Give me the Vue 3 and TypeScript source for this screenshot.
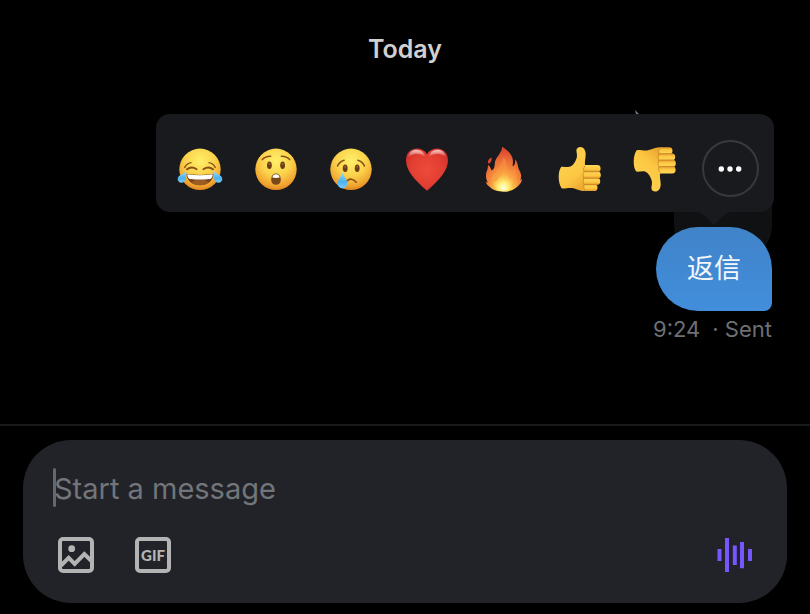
<script setup lang="ts">
import { ref } from 'vue'

interface Reaction {
  id: string
  label: string
}

const reactions: Reaction[] = [
  { id: 'joy', label: 'Laugh' },
  { id: 'astonished', label: 'Surprised' },
  { id: 'cry', label: 'Sad' },
  { id: 'heart', label: 'Love' },
  { id: 'fire', label: 'Fire' },
  { id: 'up', label: 'Thumbs up' },
  { id: 'down', label: 'Thumbs down' },
]

const draft = ref('')
</script>

<template>
  <div class="page">
    <svg class="defs" width="0" height="0" aria-hidden="true">
      <defs>
        <radialGradient id="face" cx=".5" cy=".3" r=".72">
          <stop offset="0" stop-color="#fff06a" />
          <stop offset=".5" stop-color="#fbd24b" />
          <stop offset=".85" stop-color="#efa12e" />
          <stop offset="1" stop-color="#dc7f1e" />
        </radialGradient>
        <linearGradient id="tear" x1="0" y1="0" x2="0" y2="1">
          <stop offset="0" stop-color="#9bdcf8" />
          <stop offset=".6" stop-color="#4eb2ee" />
          <stop offset="1" stop-color="#76cdf8" />
        </linearGradient>
        <radialGradient id="heartFill" cx=".5" cy=".5" r=".6">
          <stop offset="0" stop-color="#ee4b3b" />
          <stop offset=".7" stop-color="#e03c31" />
          <stop offset="1" stop-color="#c92f2b" />
        </radialGradient>
        <linearGradient id="gloss" x1="0" y1="0" x2="0" y2="1">
          <stop offset="0" stop-color="#fff" stop-opacity=".75" />
          <stop offset="1" stop-color="#fff" stop-opacity="0" />
        </linearGradient>
        <radialGradient id="flame" cx=".5" cy=".9" r=".85">
          <stop offset="0" stop-color="#fff6a0" />
          <stop offset=".22" stop-color="#fdd84f" />
          <stop offset=".5" stop-color="#f58a3c" />
          <stop offset="1" stop-color="#dc4530" />
        </radialGradient>
        <radialGradient id="core" cx=".5" cy=".85" r=".7">
          <stop offset="0" stop-color="#fffde0" />
          <stop offset=".35" stop-color="#fff07a" />
          <stop offset="1" stop-color="#fbb43c" stop-opacity=".1" />
        </radialGradient>
        <linearGradient id="hand" x1="0" y1="0" x2=".6" y2="1">
          <stop offset="0" stop-color="#ffd452" />
          <stop offset=".7" stop-color="#fcc844" />
          <stop offset="1" stop-color="#eda831" />
        </linearGradient>
        <linearGradient id="finger" x1="0" y1="0" x2="0" y2="1">
          <stop offset="0" stop-color="#ffd756" />
          <stop offset=".6" stop-color="#fcc742" />
          <stop offset="1" stop-color="#dd952a" />
        </linearGradient>
      </defs>
    </svg>

    <main class="thread">
      <h1 class="day">Today</h1>

      <div class="picker" role="toolbar" aria-label="Reactions">
        <svg class="pointer" viewBox="0 0 4 5" aria-hidden="true"><path d="M0 0l4 4H1z" fill="#77797c" /></svg>
        <button v-for="r in reactions" :key="r.id" type="button" class="reaction" :aria-label="r.label">
          <svg class="emoji" viewBox="0 0 48 48" aria-hidden="true">
            <template v-if="r.id === 'joy'">
              <circle cx="24" cy="24.3" r="20.7" fill="url(#face)" />
              <g fill="none" stroke="#89501a" stroke-linecap="round">
                <path d="M8.8 22.4Q10.6 18.6 15 17.6M39.2 22.4Q37.4 18.6 33 17.6" stroke-width="1.4" />
                <path d="M11 24.3Q15.5 20.8 20.6 24.2M27.4 24.2Q32.5 20.8 37 24.3" stroke-width="1.9" />
              </g>
              <path d="M10.3 28.8Q24 31 37.7 28.8C37 36 31.5 40.2 24 40.2S11 36 10.3 28.8z" fill="#754317" />
              <path d="M15.5 37Q24 31.5 32.5 37Q29 40.2 24 40.2T15.5 37z" fill="#9a5c22" />
              <path d="M11.2 29.2Q24 31.2 36.8 29.2Q36.4 33.8 33.5 34Q24 35 14.5 34Q11.6 33.8 11.2 29.2z" fill="#fff" />
              <path d="M10.2 26.2C10.8 31.5 10.2 37.8 5.4 37.8C2.4 37.8.8 34.8 2.2 32.1C3.8 29.6 7.2 29.2 10.2 26.2z" fill="url(#tear)" />
              <path d="M37.8 26.2C37.2 31.5 37.8 37.8 42.6 37.8C45.6 37.8 47.2 34.8 45.8 32.1C44.2 29.6 40.8 29.2 37.8 26.2z" fill="url(#tear)" />
            </template>
            <template v-else-if="r.id === 'astonished'">
              <circle cx="24" cy="24.3" r="20.7" fill="url(#face)" />
              <path d="M10.3 14.6Q13.4 11 18.6 11.2M37.7 14.6Q34.6 11 29.4 11.2" fill="none" stroke="#89501a" stroke-width="1.6" stroke-linecap="round" />
              <ellipse cx="17.4" cy="20.3" rx="2.4" ry="3.8" fill="#6e3d14" />
              <ellipse cx="30.6" cy="20.3" rx="2.4" ry="3.8" fill="#6e3d14" />
              <ellipse cx="17.4" cy="18.8" rx=".9" ry="1" fill="#a06a35" />
              <ellipse cx="30.6" cy="18.8" rx=".9" ry="1" fill="#a06a35" />
              <path d="M24 28.5C27 28.5 28.8 31 28.8 34.7C28.8 38 26.8 39.8 24 39.8S19.2 38 19.2 34.7C19.2 31 21 28.5 24 28.5z" fill="#7b481a" />
              <path d="M20.4 32.6Q20.8 29.2 24 29.2T27.6 32.6Q24 33.4 20.4 32.6z" fill="#fff" />
            </template>
            <template v-else-if="r.id === 'cry'">
              <circle cx="24" cy="24.3" r="20.7" fill="url(#face)" />
              <path d="M10.5 21Q12.5 16.5 17 15.2M37.5 21Q35.5 16.5 31 15.2" fill="none" stroke="#89501a" stroke-width="1.6" stroke-linecap="round" />
              <ellipse cx="18.2" cy="23.2" rx="2.4" ry="3.8" fill="#6e3d14" />
              <ellipse cx="30.2" cy="23.2" rx="2.4" ry="3.8" fill="#6e3d14" />
              <ellipse cx="18.2" cy="21.8" rx=".9" ry="1" fill="#a06a35" />
              <ellipse cx="30.2" cy="21.8" rx=".9" ry="1" fill="#a06a35" />
              <path d="M19.5 36.2Q24.5 31.8 29.2 37.2" fill="none" stroke="#89501a" stroke-width="1.7" stroke-linecap="round" />
              <path d="M15.4 27C16 31.2 20.3 34 20.3 38.2C20.3 41.2 18.2 43.2 15.5 43.2S10.7 41.2 10.7 38.2C10.7 34 14.8 31.2 15.4 27z" fill="url(#tear)" />
            </template>
            <template v-else-if="r.id === 'heart'">
              <path d="M24 9.2C26.2 5.4 30 3.6 34.1 3.6C40.8 3.6 45 8.6 45 15.2C45 25.5 36.5 34.8 24 45.8C11.5 34.8 3 25.5 3 15.2C3 8.6 7.2 3.6 13.9 3.6C18 3.6 21.8 5.4 24 9.2z" fill="url(#heartFill)" />
              <path d="M5 12.5C6 7 9.6 4.6 14 4.8C18.5 5 21.2 8 22 11.5Q13 5.5 5 12.5zM26 11.5C26.8 8 29.5 5 34 4.8C38.4 4.6 42 7 43 12.5Q35 5.5 26 11.5z" fill="url(#gloss)" />
            </template>
            <template v-else-if="r.id === 'fire'">
              <path d="M23.2 1.8C28.5 5.2 33.8 9.6 34 16.2C34.1 18.4 33.5 20 33.7 21.2C36 20.2 36.3 17.2 36.1 14.6C39.5 18 38.4 22 40.4 25.5C42.4 29.3 42.8 31.6 41.2 35.2L43 33.8C43 37.5 40.4 40 37.6 42.3C33.6 45.8 29 46.7 24.5 46.7C19 46.7 14 45.5 10.2 41.6C8.2 40 6.8 38.2 7 36.7L9 37.8C6.2 32.8 6.6 28.8 8.2 25.1C9 23.2 8.7 21.2 9.2 20C11.2 21.6 12.2 23.8 12.4 25.6C15 24.7 15.8 21.7 15.8 18.5C15.8 13.1 22.8 8.6 23.2 1.8z" fill="url(#flame)" />
              <path d="M12.5 12.5C12.9 15.4 12.3 17.6 9.5 18.8C8.1 16.6 9.5 13.6 12.5 12.5z" fill="#d84934" />
              <path d="M24.4 12C28.5 16.5 26.3 22.4 31 27C34 27.6 35 25 36.3 23.5C36 29.5 39.5 33.8 35.2 39.5C32 44 28.8 45.6 24.2 45.8C18 46 11.5 41.5 12 34.5C14.8 34.7 16.2 32 16.5 29.2C17.3 23 23.8 20.2 24.4 12z" fill="#f99840" opacity=".55" />
              <path d="M24.6 24C26 28 29.2 30 30.2 34C32 34.3 33.4 32.6 34.4 31.2C35.3 37 34.5 45.8 24.4 46C15.6 46 13.6 40.5 14 35.8C15.4 37 17 36.8 18 35.5C20.6 32 23.8 29 24.6 24z" fill="url(#core)" />
            </template>
            <g v-else :transform="r.id === 'down' ? 'matrix(1 0 0 -1 0 48.4)' : undefined">
              <path d="M25.3 1.9C28.6 1.9 30.7 5 30.7 9.2C30.7 13.2 29.5 16.2 30 20L36 21V45L30 46.1C24.5 46 21 43.4 17.2 43C12.8 42.5 10 43.9 6.6 43.2C4.6 40.2 3.7 36.2 3.7 32C3.7 28 4.4 24.4 6.2 21.8C9.2 21.3 12.8 22.8 15.5 21.6C18.3 20.3 20.4 16.8 21.7 13C22.5 10 21.4 7.3 21.4 5.2C21.4 3.2 23.2 1.9 25.3 1.9z" fill="url(#hand)" />
              <rect x="28.5" y="39.2" width="14" height="6.9" rx="3.4" fill="url(#finger)" />
              <rect x="28" y="33" width="17.2" height="7" rx="3.4" fill="url(#finger)" />
              <rect x="27.8" y="26.5" width="18" height="7.1" rx="3.4" fill="url(#finger)" />
              <rect x="28.4" y="20" width="17.2" height="7.1" rx="3.4" fill="url(#finger)" />
              <path d="M29.6 21.2Q27.6 23.8 29 26.6Q27 29.8 28.8 33.2Q27.2 36.3 29 39.6Q28 42.8 29.6 45M29.5 26.8H43.5M29.2 33.3H43.8M29.4 39.7H42.5" fill="none" stroke="#c07c22" stroke-opacity=".75" stroke-width=".9" stroke-linecap="round" />
            </g>
          </svg>
        </button>
        <button type="button" class="reaction more" aria-label="More reactions">
          <svg class="dots" viewBox="0 0 24 6" aria-hidden="true">
            <circle cx="3.3" cy="3" r="2.7" /><circle cx="12" cy="3" r="2.7" /><circle cx="20.7" cy="3" r="2.7" />
          </svg>
        </button>
        <svg class="tail" viewBox="0 0 32 15" aria-hidden="true"><path d="M0 0H32C27 1 20 9 17.5 12Q16 14 14.5 12C12 9 5 1 0 0z" fill="#191a1d" /></svg>
      </div>

      <article class="message">
        <p class="bubble">返信</p>
        <p class="meta"><time>9:24</time><span>· Sent</span></p>
      </article>
    </main>

    <footer class="footer">
      <form class="composer" @submit.prevent>
        <div class="field">
          <span class="caret"></span>
          <input v-model="draft" class="input" type="text" placeholder="Start a message" aria-label="Message" />
        </div>
        <div class="tools">
          <button type="button" class="tool" aria-label="Add a photo">
            <svg viewBox="0 0 36 36" aria-hidden="true">
              <rect x="2" y="2" width="32" height="32" rx="3" fill="none" stroke="#b4b4b5" stroke-width="4" />
              <circle cx="13.7" cy="11.7" r="3.4" fill="#b4b4b5" />
              <path d="M3 28.5L10.7 20.8L16.7 26.8L26.3 17L34 24.5" fill="none" stroke="#b4b4b5" stroke-width="4" />
            </svg>
          </button>
          <button type="button" class="tool gif" aria-label="Add a GIF">GIF</button>
          <button type="button" class="tool voice" aria-label="Record a voice message">
            <svg viewBox="0 0 36 36" aria-hidden="true">
              <path d="M.5 12h4v12h-4zM8 1h4v34H8zM15.8 8.5h4v19.5h-4zM23 5h4v26.3h-4zM31 12h4v12h-4z" fill="#7856ff" />
            </svg>
          </button>
        </div>
      </form>
    </footer>
  </div>
</template>

<style>
body {
  margin: 0;
  background: #000;
}
</style>

<style scoped>
.page {
  display: flex;
  flex-direction: column;
  min-height: 100vh;
  background: #000;
  font-family: Inter, "Noto Sans CJK SC", sans-serif;
}

.page * {
  box-sizing: border-box;
}

.defs {
  position: absolute;
}

button {
  padding: 0;
  border: 0;
  background: none;
  cursor: pointer;
}

.thread {
  flex: 1;
  display: flex;
  flex-direction: column;
  padding: 33px 36px 0;
}

.day {
  margin: 0 0 49px;
  color: #d0d0d0;
  font-size: 25px;
  font-weight: 600;
  line-height: 32px;
  text-align: center;
}

.picker {
  position: relative;
  z-index: 1;
  display: flex;
  align-items: center;
  justify-content: space-between;
  margin-left: 120px;
  padding: 26px 15px 15px 16px;
  border-radius: 14px;
  background: #191a1d;
}

.reaction {
  display: grid;
  place-items: center;
  width: 56px;
  height: 57px;
}

.emoji {
  width: 48px;
  height: 48px;
}

.more {
  width: 57px;
  border: 2px solid #38393c;
  border-radius: 50%;
}

.dots {
  width: 24px;
  height: 6px;
  fill: #fff;
}

.pointer {
  position: absolute;
  right: 135px;
  top: -4px;
  width: 4px;
  height: 5px;
}

.tail {
  position: absolute;
  right: 44px;
  top: 100%;
  width: 32px;
  height: 15px;
}

.message {
  position: relative;
  display: flex;
  flex-direction: column;
  align-items: flex-end;
  margin: 15px 2px 0 0;
}

/* Dimmed bubble that sits behind the message */
.message::before {
  content: "";
  position: absolute;
  right: 0;
  top: -26px;
  width: 98px;
  height: 54px;
  border-radius: 0 0 28px 28px;
  background: #0f1112;
}

.bubble {
  position: relative;
  margin: 0;
  padding: 22px 31px;
  border-radius: 42px 42px 8px 42px;
  background: linear-gradient(#4083c9, #428edb);
  color: #f4f7fa;
  font-size: 27px;
  font-weight: 400;
  line-height: 40px;
}

.meta {
  display: flex;
  gap: 12px;
  margin: 4px 0 0;
  color: #6d7074;
  font-size: 22px;
  line-height: 28px;
}

.footer {
  padding: 14px 23px 11px;
  border-top: 2px solid #18191a;
}

.composer {
  padding: 28px 34px 30px 30px;
  border-radius: 48px;
  background: #212328;
}

.field {
  display: flex;
  height: 39px;
  margin-bottom: 30px;
}

.caret {
  width: 3px;
  margin-right: -2px;
  border-radius: 2px;
  background: #65676b;
}

.input {
  flex: 1;
  min-width: 0;
  padding: 2px 0 0;
  border: 0;
  outline: 0;
  background: none;
  color: #d0d0d0;
  font: 400 29px Inter, "Noto Sans CJK SC", sans-serif;
}

.input::placeholder {
  color: #72757a;
  opacity: 1;
}

.tools {
  display: flex;
  gap: 41px;
  padding-left: 5px;
}

.tool {
  width: 36px;
  height: 36px;
}

.tool svg {
  display: block;
  width: 36px;
  height: 36px;
}

.gif {
  border: 4px solid #b4b4b5;
  border-radius: 5px;
  color: #b4b4b5;
  font: 900 15px/28px Lato, sans-serif;
}

.voice {
  margin-left: auto;
}
</style>
